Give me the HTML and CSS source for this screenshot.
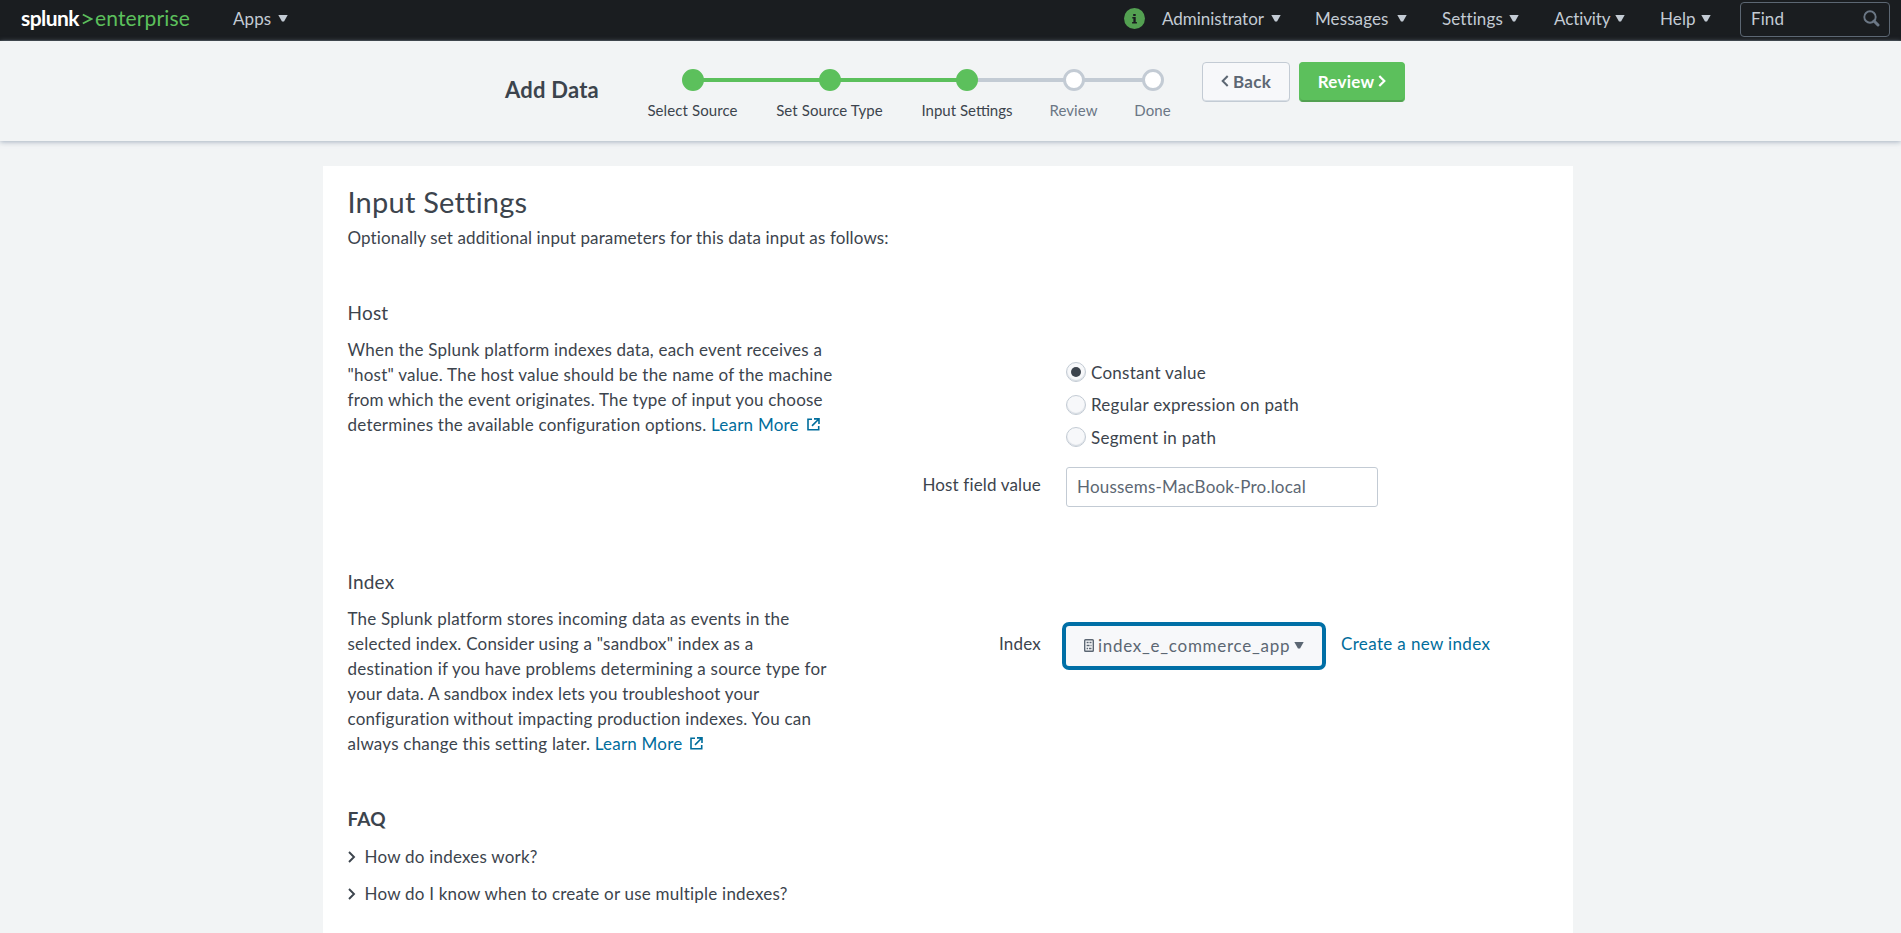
FILE: index.html
```html
<!DOCTYPE html>
<html lang="en">
<head>
<meta charset="utf-8">
<title>Add Data - Input Settings | Splunk</title>
<link rel="stylesheet" href="styles.css">
</head>
<body>
<header class="navbar">
  <a class="brand"><span class="brand-name">splunk</span><svg class="brand-mark" width="11" height="12" viewBox="0 0 11 12"><path d="M.8 1.6 9.4 6 .8 10.4" fill="none" stroke="#5cc05c" stroke-width="1.7"/></svg><span class="brand-product">enterprise</span></a>
  <a class="nav-item nav-apps"><span>Apps</span><i class="caret"></i></a>
  <nav class="nav-right">
    <svg class="info" width="21" height="21" viewBox="0 0 21 21"><circle cx="10.5" cy="10.5" r="10.5" fill="#53a051"/><path d="M9.2 6h2.5v2H9.2zM8.3 9h3.4v5h1.2v1.4H8.1V14h1.3v-3.600H8.300z" fill="#1a1d20"/></svg>
    <a class="nav-item nav-admin"><span>Administrator</span><i class="caret"></i></a>
    <a class="nav-item nav-messages"><span>Messages</span><i class="caret"></i></a>
    <a class="nav-item nav-settings"><span>Settings</span><i class="caret"></i></a>
    <a class="nav-item nav-activity"><span>Activity</span><i class="caret"></i></a>
    <a class="nav-item nav-help"><span>Help</span><i class="caret"></i></a>
    <div class="find"><span>Find</span><svg width="17" height="17" viewBox="0 0 17 17" fill="none" stroke="#6b7785"><circle cx="7" cy="7" r="5.700" stroke-width="1.900"/><path d="m11 11 4 4" stroke-width="3" stroke-linecap="round"/></svg></div>
  </nav>
</header>

<section class="wizard">
  <h1 class="wizard-title">Add Data</h1>
  <ol class="steps">
    <li class="step step-source done"><span class="dot"></span><span class="step-label">Select Source</span></li>
    <li class="step step-type done"><span class="dot"></span><span class="step-label">Set Source Type</span></li>
    <li class="step step-input done current"><span class="dot"></span><span class="step-label">Input Settings</span></li>
    <li class="step step-review"><span class="dot"></span><span class="step-label">Review</span></li>
    <li class="step step-done last"><span class="dot"></span><span class="step-label">Done</span></li>
  </ol>
  <div class="wizard-buttons">
    <button class="btn btn-back"><svg width="8" height="12" viewBox="0 0 8 12"><path d="M6.700 1 1.700 6l5 5" fill="none" stroke="currentColor" stroke-width="2"/></svg><span>Back</span></button>
    <button class="btn btn-primary"><span>Review</span><svg width="8" height="12" viewBox="0 0 8 12"><path d="m1.300 1 5 5-5 5" fill="none" stroke="currentColor" stroke-width="2.200"/></svg></button>
  </div>
</section>

<main class="panel">
  <h2 class="panel-title">Input Settings</h2>
  <p class="intro">Optionally set additional input parameters for this data input as follows:</p>

  <section class="setting setting-host">
    <div class="description">
      <h3 class="heading">Host</h3>
      <p class="text">When the Splunk platform indexes data, each event receives a<br>"host" value. The host value should be the name of the machine<br>from which the event originates. The type of input you choose<br>determines the available configuration options. <a class="link">Learn More<svg class="external" width="13" height="13" viewBox="0 0 13 13" fill="none" stroke="currentColor" stroke-width="1.600"><path d="M5 1.300H1v10.500h10.700V8M7 .9h5v5M11.600 1.300 5 7.900"/></svg></a></p>
    </div>
    <div class="controls">
      <div class="radios">
        <label class="radio"><i class="radio-dot checked"></i><span>Constant value</span></label>
        <label class="radio"><i class="radio-dot"></i><span>Regular expression on path</span></label>
        <label class="radio"><i class="radio-dot"></i><span>Segment in path</span></label>
      </div>
      <div class="field">
        <label class="field-label">Host field value</label>
        <div class="input">Houssems-MacBook-Pro.local</div>
      </div>
    </div>
  </section>

  <section class="setting setting-index">
    <div class="description">
      <h3 class="heading">Index</h3>
      <p class="text">The Splunk platform stores incoming data as events in the<br>selected index. Consider using a "sandbox" index as a<br>destination if you have problems determining a source type for<br>your data. A sandbox index lets you troubleshoot your<br>configuration without impacting production indexes. You can<br>always change this setting later. <a class="link">Learn More<svg class="external" width="13" height="13" viewBox="0 0 13 13" fill="none" stroke="currentColor" stroke-width="1.600"><path d="M5 1.300H1v10.500h10.700V8M7 .9h5v5M11.600 1.300 5 7.900"/></svg></a></p>
    </div>
    <div class="controls">
      <div class="field">
        <label class="field-label">Index</label>
        <button class="dropdown"><svg width="10" height="13" viewBox="0 0 10 13" fill="none" stroke="currentColor"><rect x=".7" y=".7" width="8.600" height="11.600" rx=".8" stroke-width="1.400"/><path d="M2.600 3.500h2M5.500 3.500h2M2.600 6.500h3M6.500 6.500h1M2.600 9.500h1.500M5 9.500h2.500" stroke-width="1.300"/></svg><span>index_e_commerce_app</span><i class="caret"></i></button>
        <a class="link create">Create a new index</a>
      </div>
    </div>
  </section>

  <section class="faq">
    <h3 class="heading faq-heading">FAQ</h3>
    <a class="question"><svg width="8" height="12" viewBox="0 0 8 12"><path d="m1 1 5 5-5 5" fill="none" stroke="currentColor" stroke-width="1.900"/></svg><span>How do indexes work?</span></a>
    <a class="question"><svg width="8" height="12" viewBox="0 0 8 12"><path d="m1 1 5 5-5 5" fill="none" stroke="currentColor" stroke-width="1.900"/></svg><span>How do I know when to create or use multiple indexes?</span></a>
  </section>
</main>
</body>
</html>
```
FILE: styles.css
```css
* { box-sizing: border-box; }
html, body { height: 100%; }
body {
  margin: 0;
  overflow: hidden;
  background: #f2f4f5;
  color: #3c444d;
  font: 17px/25px Lato, "Open Sans", sans-serif;
  letter-spacing: .22px;
}
h1, h2, h3, p, ol { margin: 0; padding: 0; font-weight: 400; }
span, a, label { white-space: nowrap; }
svg { display: block; flex: none; }
.caret {
  flex: none;
  width: 10px;
  height: 7px;
  background: currentColor;
  clip-path: polygon(0 0, 100% 0, 60% 100%, 40% 100%);
}

/* Top navigation */
.navbar {
  display: flex;
  height: 41px;
  padding: 0 11px 0 21px;
  background: #1a1d20;
  border-bottom: 1px solid #2b3033;
  color: #c3cbd4;
  letter-spacing: .1px;
}
.brand { display: flex; width: 212px; height: 35px; align-items: center; font-size: 21px; }
.brand-name { width: 61px; color: #fff; font-weight: 700; letter-spacing: -.55px; }
.brand-mark { margin: 2px 2px 0 0; }
.brand-product { color: #5cc05c; letter-spacing: .15px; }
.nav-item { display: flex; height: 36px; align-items: center; justify-content: space-between; flex: none; }
.nav-apps { width: 55px; }
.nav-right { display: flex; margin-left: auto; height: 40px; }
.info { margin: 8px 17px 0 0; }
.nav-admin { width: 119px; margin-right: 34px; letter-spacing: -.02px; }
.nav-messages { width: 92px; margin-right: 35px; }
.nav-settings { width: 77px; margin-right: 35px; }
.nav-activity { width: 71px; margin-right: 35px; letter-spacing: -.1px; }
.nav-help { width: 51px; margin-right: 29px; }
.find {
  display: flex;
  align-items: center;
  justify-content: space-between;
  width: 150px;
  height: 35px;
  margin-top: 2px;
  padding: 0 9px 2px 10px;
  border: 1px solid #5c6773;
  border-radius: 4px;
}

/* Wizard bar */
.wizard {
  display: flex;
  height: 100px;
  padding-left: 505px;
  box-shadow: 0 1px 5px rgba(140, 155, 175, .75);
}
.wizard-title { width: 142px; padding-top: 36px; font-size: 22px; line-height: 26px; font-weight: 700; }
.steps { display: flex; width: 555px; padding-top: 28px; list-style: none; font-size: 15px; }
.step { position: relative; display: flex; flex: none; flex-direction: column; align-items: center; color: #6b7785; }
.step-source { width: 91px; margin-right: 38px; --reach: 137px; }
.step-type { width: 107px; margin-right: 39px; --reach: 137px; }
.step-input { width: 90px; margin-right: 38px; --reach: 106px; }
.step-review { width: 47px; margin-right: 38px; --reach: 79px; }
.step-done { width: 35px; }
.step::before {
  content: "";
  position: absolute;
  left: 50%;
  top: 9px;
  width: var(--reach);
  height: 4px;
  background: #c3cbd4;
}
.step.done::before { background: #5cc05c; }
.step.current::before { background: #c3cbd4; }
.step.last::before { display: none; }
.dot { position: relative; z-index: 1; width: 22px; height: 22px; border: 3px solid #c3cbd4; border-radius: 50%; background: #fff; }
.done .dot { border-color: #5cc05c; background: #5cc05c; }
.step-label { line-height: 24px; margin-top: 7px; letter-spacing: .1px; }
.step-input .step-label { letter-spacing: 0; }
.done .step-label { color: #3c444d; }
.wizard-buttons { display: flex; gap: 9px; padding-top: 21px; }
.btn {
  display: flex;
  align-items: center;
  justify-content: center;
  gap: 4px;
  height: 40px;
  padding: 0 0 2px;
  border: 1px solid #c3cbd4;
  border-radius: 4px;
  background: #f7f8fa;
  box-shadow: inset 0 -1px 0 #d8dee5;
  color: #5c6773;
  font: 700 17px/25px Lato, sans-serif;
  letter-spacing: .25px;
}
.btn-back { width: 88px; }
.btn-primary { width: 106px; border-color: #5cc05c #5cc05c #53a051; background: #5cc05c; box-shadow: inset 0 -1px 0 #53a051; color: #fff; }

/* Content panel */
.panel { width: 1250px; height: 767px; margin: 25px 0 0 323px; padding: 18px 25px 0 24.500px; background: #fff; }
.panel-title { font-size: 29px; line-height: 36px; }
.intro { margin-top: 5px; letter-spacing: .13px; }
.setting { display: flex; }
.setting-host { height: 269px; margin-top: 50px; }
.setting-index { height: 237px; }
.description { width: 490.500px; }
.heading { font-size: 19px; line-height: 25px; }
.text { margin-top: 12px; white-space: nowrap; }
.link { color: #006d9c; }
.external { display: inline-block; margin-left: 8px; }
.setting-host .controls { padding-top: 62px; }
.setting-index .controls { padding-top: 53px; }
.radios { display: flex; flex-direction: column; gap: 12.500px; padding-left: 228px; letter-spacing: .27px; }
.radio { display: flex; align-items: center; gap: 5px; height: 20px; }
.radio-dot { display: flex; width: 20px; height: 20px; border: 1px solid #c3cbd4; border-radius: 50%; background: #f7f8fa; box-shadow: inset 0 -1px 1px #d3d9e0; }
.radio-dot.checked::after { content: ""; width: 10px; height: 10px; margin: auto; border-radius: 50%; background: #3c444d; }
.field { display: flex; }
.setting-host .field { margin-top: 20px; }
.field-label { width: 203px; margin-right: 25px; text-align: right; }
.setting-host .field-label { padding-top: 5px; letter-spacing: .15px; }
.input { width: 312px; height: 40px; padding: 6px 10px; border: 1px solid #c3cbd4; border-radius: 3px; color: #5c6773; letter-spacing: .2px; }
.setting-index .field-label { margin-right: 21px; padding-top: 9px; }
.dropdown {
  display: flex;
  align-items: center;
  width: 264px;
  height: 48px;
  padding: 0 18px 2px;
  border: 4px solid #006fa6;
  border-radius: 7px;
  background: #f7f8fa;
  color: #5c6773;
  font: 17px/25px Lato, sans-serif;
  letter-spacing: .73px;
}
.dropdown svg { margin-right: 4px; }
.dropdown .caret { margin-left: auto; }
.create { margin: 9px 0 0 15px; letter-spacing: .36px; }

/* FAQ */
.faq { display: flex; flex-direction: column; gap: 12px; }
.faq-heading { margin-bottom: 1px; font-weight: 700; }
.question { display: flex; align-items: center; gap: 9px; height: 25px; }
```
